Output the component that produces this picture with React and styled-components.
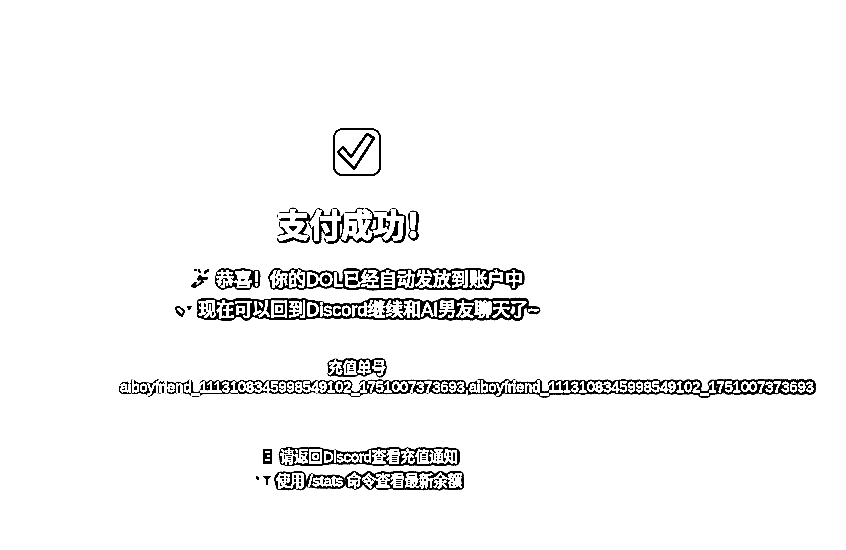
import React from 'react';
import styled, { createGlobalStyle } from 'styled-components';

const GlobalStyle = createGlobalStyle`
  html, body {
    margin: 0;
    padding: 0;
    background: #fff;
  }
`;

const CheckIcon = () => (
  <svg width="48" height="48" viewBox="0 0 48 48" fill="none">
    <rect x="1" y="1" width="46" height="46" rx="9" fill="#fff" stroke="#000" strokeWidth="1.6" />
    <path
      d="M5 24 L10 19 L18 29 L34 6 L41 10 L21 41 Z"
      fill="#fff"
      stroke="#000"
      strokeWidth="2.6"
      strokeLinejoin="round"
    />
  </svg>
);

const Party = () => (
  <Glyph width="20" height="20" viewBox="0 0 20 20">
    <path
      d="M3 1 L5 1 L6 3 L4 3 Z M8 1 L10 4 L9 5 L7 3 Z M14 3 L18 1 L18 3 L13 6 Z M9 7 L11 9 L17 9 L17 11 L11 12 L13 14 L8 17 L3 20 L0 18 L3 15 L8 14 L6 11 Z"
      fill="#000"
    />
    <path d="M5 16 L9 12 L10 13 L6 17 Z" fill="#fff" />
  </Glyph>
);

const Heart = () => (
  <Glyph width="18" height="14" viewBox="0 0 18 14">
    <path d="M0 4 L3 2 L8 5 L10 7 L7 13 L2 9 Z" fill="#000" />
    <path d="M2 4.5 L4 4 L8 7 L7 10 L3 7 Z" fill="#fff" />
    <path d="M12 3 L17 2 L14 6 Z" fill="#000" />
  </Glyph>
);

const Phone = () => (
  <Glyph width="20" height="15" viewBox="0 0 20 15">
    <path d="M7 0 H16 V15 H7 Z" fill="#000" />
    <path d="M9 2 H14 V4 H9 Z M11 6 H14 V8 H11 Z M9 10 H14 V12 H9 Z" fill="#fff" />
  </Glyph>
);

const Bulb = () => (
  <Glyph width="20" height="13" viewBox="0 0 20 13">
    <path d="M4 1 L7 3 L6 5 L4 3 Z M11 1 H19 L16 4 V10 H14 V4 Z" fill="#000" />
  </Glyph>
);

export default function App() {
  return (
    <>
      <GlobalStyle />
      <Page>
        <Card>
          <IconWrap>
            <CheckIcon />
          </IconWrap>
          <Title>支付成功！</Title>
          <Message $heavy={false}><Party /> 恭喜！你的DOL已经自动发放到账户中</Message>
          <Message $heavy><Heart /> 现在可以回到Discord继续和AI男友聊天了~</Message>
          <OrderBox>
            <OrderLabel>充值单号</OrderLabel>
            <OrderId>aiboyfriend_1113108345998549102_1751007373693,aiboyfriend_1113108345998549102_1751007373693</OrderId>
          </OrderBox>
          <Hints>
            <Hint><Phone /> 请返回Discord查看充值通知</Hint>
            <Hint><Bulb /> 使用 /stats 命令查看最新余额</Hint>
          </Hints>
        </Card>
      </Page>
    </>
  );
}

const Page = styled.div`
  width: 846px;
  height: 550px;
  overflow: hidden;
  background: linear-gradient(90deg, #8e8e8e 0%, #878787 60%, #838383 100%);
  filter: grayscale(1) contrast(100);
  font-family: "Liberation Sans", "Noto Sans CJK SC", sans-serif;
  color: #fff;
`;

const Card = styled.main`
  width: 474px;
  margin-left: 120px;
  padding-top: 128px;
  text-align: center;
`;

const IconWrap = styled.div`
  height: 48px;
  margin-bottom: 28px;
  svg {
    display: block;
    margin: 0 auto;
  }
`;

const Title = styled.h1`
  margin: 0 0 17px;
  font-size: 32px;
  line-height: 44px;
  font-weight: 700;
  -webkit-text-stroke: 0.8px #fff;
  text-shadow: 1px 1px 3px #000, 0 0 3px rgba(0, 0, 0, 0.7);
`;

const Message = styled.p`
  margin: 0;
  font-size: 18px;
  line-height: 30px;
  font-weight: 500;
  white-space: nowrap;
  -webkit-text-stroke: 0.5px #fff;
  text-shadow: 0 0 3px #000, 0 0 4px rgba(0, 0, 0, ${(p) => (p.$heavy ? 1 : 0.6)});
`;

const Glyph = styled.svg`
  vertical-align: -2px;
`;

const OrderBox = styled.section`
  margin-top: 33px;
`;

const OrderLabel = styled.div`
  font-size: 14.4px;
  line-height: 20px;
  -webkit-text-stroke: 0.5px #fff;
  text-shadow: 0 0 3px #000, 0 0 4px rgba(0, 0, 0, 0.7);
`;

const OrderId = styled.div`
  font-size: 14.4px;
  line-height: 18px;
  letter-spacing: 0.1px;
  white-space: nowrap;
  text-align: left;
  -webkit-text-stroke: 0.5px #fff;
  text-shadow: 0 0 3px #000, 0 0 3px rgba(0, 0, 0, 0.5);
`;

const Hints = styled.section`
  margin-top: 49px;
`;

const Hint = styled.p`
  margin: 0;
  font-size: 14.4px;
  line-height: 24px;
  white-space: nowrap;
  -webkit-text-stroke: 0.5px #fff;
  text-shadow: 0 0 3px #000, 0 0 4px rgba(0, 0, 0, 0.7);
`;
